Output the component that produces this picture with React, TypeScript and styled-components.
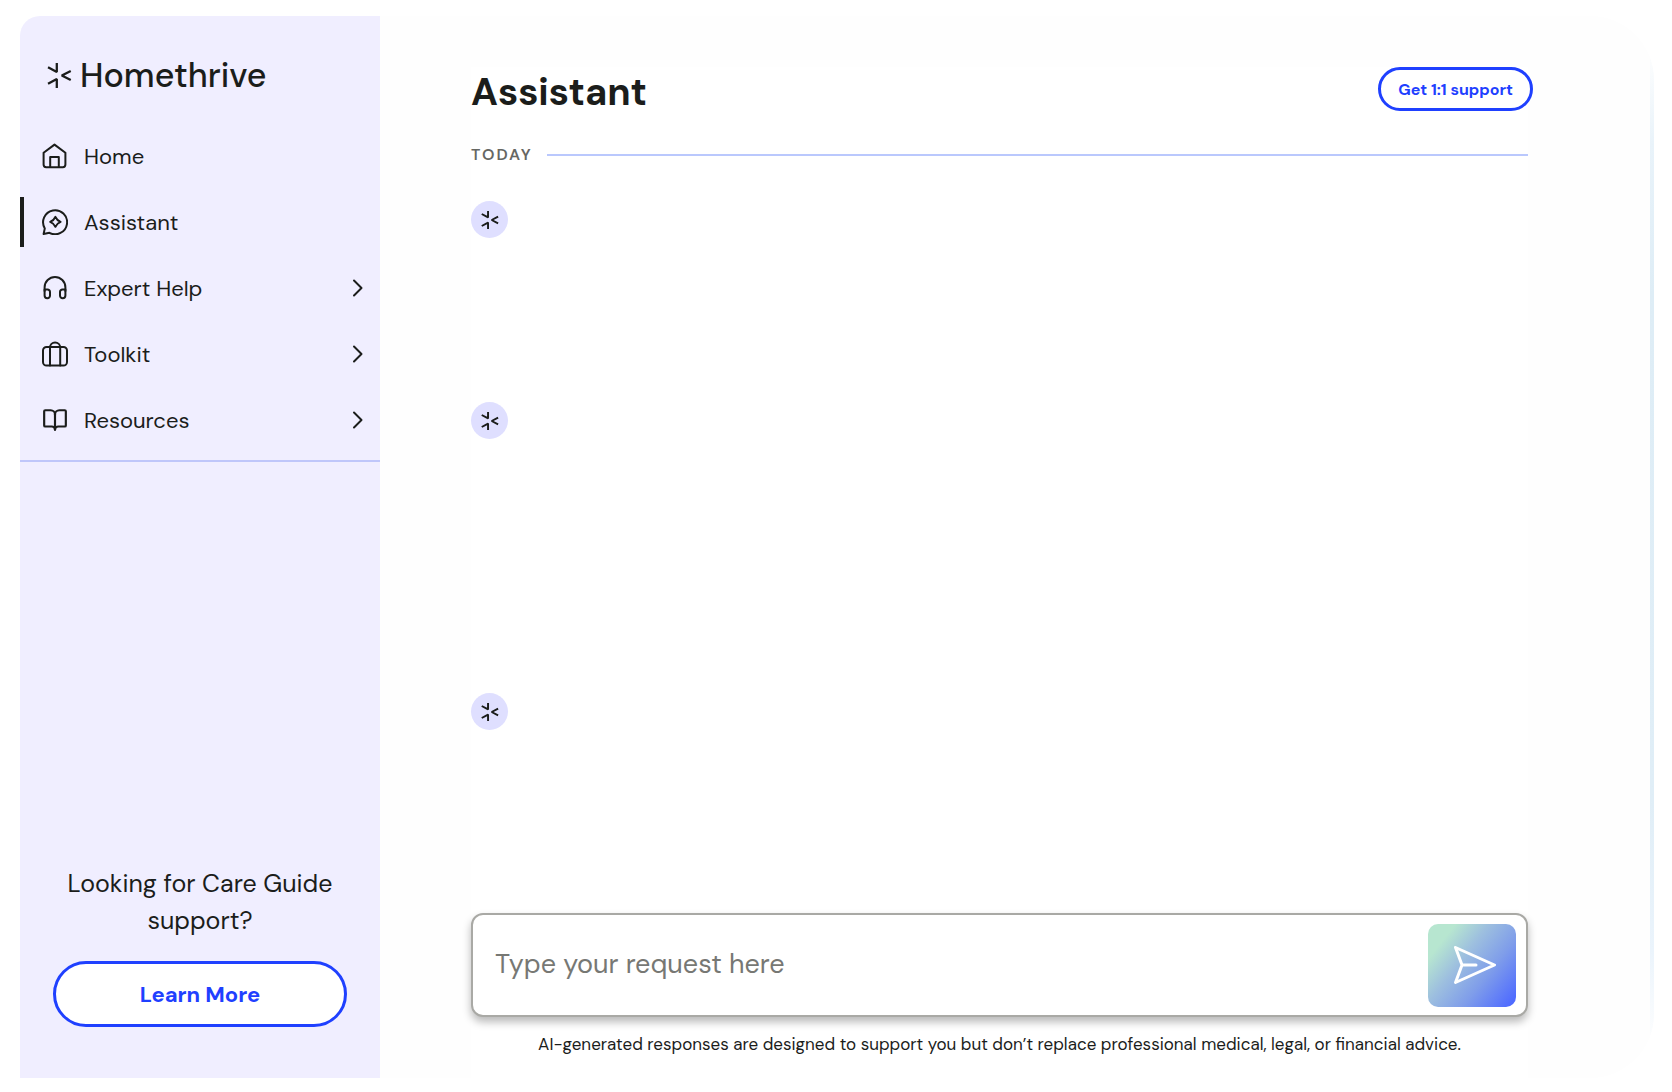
import React from "react";
import styled, { createGlobalStyle, css } from "styled-components";
import { BookOpen } from "lucide-react";

const ink = "#1b1d1b";
const blue = "#1f40ff";

const GlobalStyle = createGlobalStyle`
  *, *::before, *::after { box-sizing: border-box; }
  body {
    margin: 0;
    background: #fff;
    color: ${ink};
    font-family: "DM Sans", Inter, "Liberation Sans", sans-serif;
  }
  button, input { font-family: inherit; }
  h1, p, ul, ol { margin: 0; padding: 0; }
`;

const Page = styled.div`
  min-height: 100vh;
  padding: 16px 18px 14px 20px;
  display: flex;
`;

const Shell = styled.div`
  flex: 1;
  display: grid;
  grid-template-columns: 360px minmax(0, 1fr) 4px;
  background: #fefefe;
  border-radius: 20px 64px 64px 0;
  overflow: hidden;
`;

const EdgeGlow = styled.div`
  background: linear-gradient(
    to bottom,
    rgba(222, 237, 246, 0) 3%,
    #e9f3fa 12%,
    #deedf6 26%,
    #e0eef7 74%,
    #ebf4fc 88%,
    rgba(240, 247, 253, 0) 97%
  );
`;

const Sidebar = styled.aside`
  display: flex;
  flex-direction: column;
  background: #f0eeff;
`;

const Brand = styled.a`
  display: flex;
  align-items: center;
  gap: 8px;
  height: 107px;
  padding: 11px 27px 0;
  color: inherit;
  text-decoration: none;
  font-size: 34px;
  font-weight: 500;
`;

const NavList = styled.ul`
  list-style: none;
  border-bottom: 2px solid #bfc6fa;
`;

const NavLink = styled.a<{ $active?: boolean }>`
  display: flex;
  align-items: center;
  gap: 16px;
  height: 50px;
  margin: 8px 0 16px;
  padding: 0 10px 0 18px;
  border-left: 4px solid transparent;
  color: inherit;
  text-decoration: none;
  font-size: 22px;
  ${(p) =>
    p.$active &&
    css`
      border-left-color: ${ink};
    `}
`;

const NavItem = styled.li`
  &:last-child ${NavLink} {
    margin-bottom: 15px;
  }
`;

const NavLabel = styled.span`
  flex: 1;
`;

const Promo = styled.section`
  margin-top: auto;
  padding: 0 33px 51px;
  text-align: center;
`;

const PromoText = styled.p`
  margin-bottom: 22px;
  font-size: 25px;
  line-height: 37px;
`;

const OutlineButton = styled.button<{ $large?: boolean }>`
  border: 3px solid ${blue};
  border-radius: 33px;
  background: #fff;
  color: ${blue};
  font-weight: 700;
  cursor: pointer;
  ${(p) =>
    p.$large
      ? css`
          width: 100%;
          height: 66px;
          font-size: 22px;
        `
      : css`
          height: 44px;
          padding: 0 17px;
          font-size: 16px;
        `}
`;

const Main = styled.main`
  display: flex;
  flex-direction: column;
  margin: 51px 122px 0 91px;
  padding-bottom: 22px;
  background: #fff;
`;

const Header = styled.header`
  display: flex;
  justify-content: space-between;
  align-items: flex-start;
  margin-right: -5px;
`;

const Title = styled.h1`
  font-size: 38px;
  line-height: 50px;
  font-weight: 700;
`;

const DayDivider = styled.div`
  display: flex;
  align-items: center;
  gap: 14px;
  margin: 27px 0 35px;
  color: #666763;
  font-size: 16px;
  line-height: 22px;
  font-weight: 600;
  letter-spacing: 2px;
  &::after {
    content: "";
    flex: 1;
    height: 2px;
    background: #bac8fd;
  }
`;

const Thread = styled.ol`
  flex: 1;
  list-style: none;
`;

const Message = styled.li<{ $height: number }>`
  min-height: ${(p) => p.$height}px;
`;

const Avatar = styled.span`
  display: flex;
  align-items: center;
  justify-content: center;
  width: 37px;
  height: 37px;
  border-radius: 50%;
  background: #dfdfff;
`;

const Composer = styled.form`
  display: flex;
  align-items: center;
  height: 104px;
  padding: 0 10px 0 22px;
  border: 2px solid #a9a9a5;
  border-radius: 12px;
  background: #fff;
  box-shadow: 0 5px 8px rgba(0, 0, 0, 0.28);
`;

const RequestInput = styled.input`
  flex: 1;
  min-width: 0;
  height: 80px;
  padding: 0 0 3px;
  border: 0;
  outline: 0;
  background: transparent;
  color: ${ink};
  font-size: 27px;
  &::placeholder {
    color: #777874;
    opacity: 1;
  }
`;

const SendButton = styled.button`
  display: flex;
  align-items: center;
  justify-content: center;
  width: 88px;
  height: 83px;
  padding: 0 0 0 6px;
  border: 0;
  border-radius: 10px;
  background: linear-gradient(128deg, #b7e6d0 18%, #9dbfdf 40%, #7f9dea 65%, #4f6bff 95%);
  color: #fff;
  cursor: pointer;
`;

const Disclaimer = styled.p`
  margin-top: 15px;
  font-size: 17px;
  line-height: 24px;
  text-align: center;
`;

function Spark({ size, weight = 2 }: { size: number; weight?: number }) {
  return (
    <svg width={size} height={size} viewBox="0 0 24 24" fill="none" stroke="currentColor" strokeWidth={weight} strokeLinejoin="bevel" aria-hidden="true">
      <path d="M9.400 0v8.600L1 4M9.400 24v-8.600L1 20M22.800 7.600 14.200 12l8.600 4.400" />
    </svg>
  );
}

const Icon = styled.svg.attrs({ viewBox: "0 0 26 26", "aria-hidden": true })`
  width: 26px;
  height: 26px;
  flex: none;
  fill: none;
  stroke: currentColor;
  stroke-width: 2;
  stroke-linecap: round;
  stroke-linejoin: round;
`;

const HomeIcon = () => (
  <Icon>
    <path d="M1.600 9.800 12.500 1.600 23.400 9.800V21.600a2.600 2.600 0 0 1-2.600 2.600H4.200A2.600 2.600 0 0 1 1.600 21.600z" />
    <path d="M8.200 24V14h8.600v10" />
  </Icon>
);

const ChatIcon = () => (
  <Icon>
    <path d="M1.600 25 2.800 19.400A12 12 0 1 1 7.400 23.800z" />
    <path d="M13.400 7.800Q14.800 11.200 18.600 12.800 14.800 14.400 13.400 17.800 12 14.400 8.200 12.800 12 11.200 13.400 7.800z" />
  </Icon>
);

const HeadphonesIcon = () => (
  <Icon>
    <path d="M2.600 16v-3.600a10.400 10.400 0 0 1 20.800 0V16" />
    <path d="M2.600 14.600h3a2.400 2.400 0 0 1 2.400 2.400v3.600A2.600 2.600 0 0 1 5.300 23.200 2.700 2.700 0 0 1 2.600 20.500zM23.400 14.600h-3a2.400 2.400 0 0 0-2.400 2.400v3.600a2.600 2.600 0 0 0 2.700 2.600 2.700 2.700 0 0 0 2.700-2.700z" />
  </Icon>
);

const LuggageIcon = () => (
  <Icon>
    <rect x="1" y="6" width="24" height="18.500" rx="3.600" />
    <path d="M8 24.500V6.600a5 5 0 0 1 10.200 0v17.900" />
  </Icon>
);

const Chevron = () => (
  <Icon>
    <path d="m10 5.500 7.500 7.500-7.500 7.500" />
  </Icon>
);

const SendIcon = () => (
  <svg width="42" height="38" viewBox="0 0 42 38" fill="none" stroke="currentColor" strokeWidth="3" strokeLinejoin="round" strokeLinecap="round" aria-hidden="true">
    <path d="M1.500 1.500 40.500 19 1.500 36.500 8 19zM8 19h14" />
  </svg>
);

const navItems = [
  { label: "Home", icon: <HomeIcon /> },
  { label: "Assistant", icon: <ChatIcon />, active: true },
  { label: "Expert Help", icon: <HeadphonesIcon />, nested: true },
  { label: "Toolkit", icon: <LuggageIcon />, nested: true },
  { label: "Resources", icon: <BookOpen size={26} strokeWidth={2} />, nested: true },
];

const messageHeights = [201, 291, 37];

export default function App() {
  return (
    <Page>
      <GlobalStyle />
      <Shell>
        <Sidebar>
          <Brand href="#">
            <Spark size={25} weight={2.2} />
            Homethrive
          </Brand>
          <nav>
            <NavList>
              {navItems.map((item) => (
                <NavItem key={item.label}>
                  <NavLink href="#" $active={item.active} aria-current={item.active ? "page" : undefined}>
                    {item.icon}
                    <NavLabel>{item.label}</NavLabel>
                    {item.nested && <Chevron />}
                  </NavLink>
                </NavItem>
              ))}
            </NavList>
          </nav>
          <Promo>
            <PromoText>Looking for Care Guide support?</PromoText>
            <OutlineButton type="button" $large>
              Learn More
            </OutlineButton>
          </Promo>
        </Sidebar>
        <Main>
          <Header>
            <Title>Assistant</Title>
            <OutlineButton type="button">Get 1:1 support</OutlineButton>
          </Header>
          <DayDivider>TODAY</DayDivider>
          <Thread>
            {messageHeights.map((height) => (
              <Message key={height} $height={height}>
                <Avatar>
                  <Spark size={18} weight={2.600} />
                </Avatar>
              </Message>
            ))}
          </Thread>
          <Composer onSubmit={(e) => e.preventDefault()}>
            <RequestInput type="text" aria-label="Your request" placeholder="Type your request here" />
            <SendButton type="submit" aria-label="Send">
              <SendIcon />
            </SendButton>
          </Composer>
          <Disclaimer>
            AI-generated responses are designed to support you but don’t replace professional medical, legal, or financial advice.
          </Disclaimer>
        </Main>
        <EdgeGlow />
      </Shell>
    </Page>
  );
}
